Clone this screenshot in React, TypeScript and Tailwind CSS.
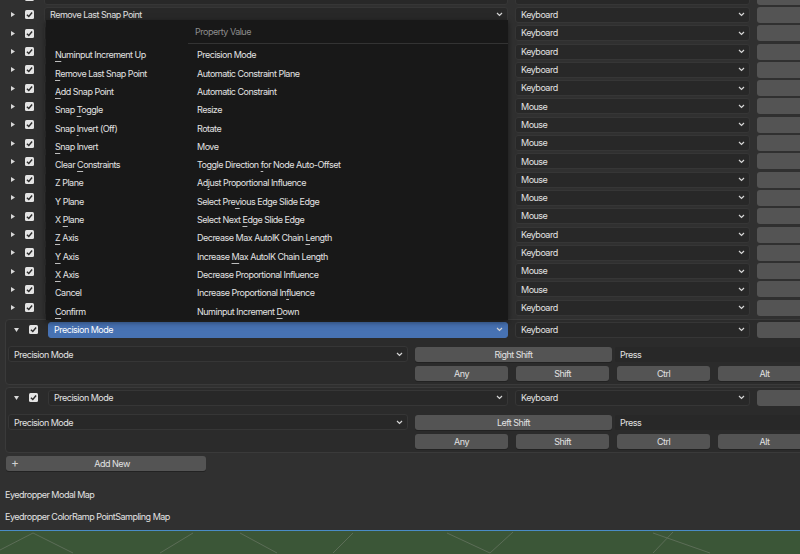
import React from "react";
import clsx from "clsx";

type MenuItem = { label: string; u?: number };

const leftItems: MenuItem[] = [
  { label: "Numinput Increment Up", u: 0 },
  { label: "Remove Last Snap Point", u: 0 },
  { label: "Add Snap Point", u: 0 },
  { label: "Snap Toggle", u: 5 },
  { label: "Snap Invert (Off)", u: 5 },
  { label: "Snap Invert", u: 0 },
  { label: "Clear Constraints", u: 6 },
  { label: "Z Plane" },
  { label: "Y Plane" },
  { label: "X Plane", u: 2 },
  { label: "Z Axis", u: 0 },
  { label: "Y Axis", u: 0 },
  { label: "X Axis", u: 0 },
  { label: "Cancel" },
  { label: "Confirm", u: 0 },
];

const rightItems: MenuItem[] = [
  { label: "Precision Mode" },
  { label: "Automatic Constraint Plane" },
  { label: "Automatic Constraint" },
  { label: "Resize" },
  { label: "Rotate" },
  { label: "Move" },
  { label: "Toggle Direction for Node Auto-Offset", u: 17 },
  { label: "Adjust Proportional Influence", u: 2 },
  { label: "Select Previous Edge Slide Edge", u: 10 },
  { label: "Select Next Edge Slide Edge", u: 12 },
  { label: "Decrease Max AutoIK Chain Length", u: 26 },
  { label: "Increase Max AutoIK Chain Length", u: 9 },
  { label: "Decrease Proportional Influence" },
  { label: "Increase Proportional Influence", u: 24 },
  { label: "Numinput Increment Down", u: 19 },
];

// collapsed keymap rows; the first is cut by the top edge, the rest sit under the open menu
const rowTypes = [
  "Keyboard", "Keyboard", "Keyboard", "Keyboard", "Keyboard", "Keyboard",
  "Mouse", "Mouse", "Mouse", "Mouse", "Mouse", "Mouse", "Mouse",
  "Keyboard", "Keyboard", "Mouse", "Mouse", "Keyboard",
];

const Label: React.FC<{ item: MenuItem }> = ({ item }) => {
  if (item.u === undefined) return <span>{item.label}</span>;
  const i = item.u;
  return (
    <span>
      {item.label.slice(0, i)}
      <span className="underline decoration-[#bdbdbd] underline-offset-[3px]">
        {item.label[i]}
      </span>
      {item.label.slice(i + 1)}
    </span>
  );
};

const Chevron = () => (
  <svg width="7" height="5" viewBox="0 0 7 5" className="shrink-0">
    <path d="M1 1l2.5 2.5L6 1" fill="none" stroke="#d6d6d6" strokeWidth="1.2" />
  </svg>
);

const TriRight = () => (
  <svg width="4" height="5" viewBox="0 0 4 5">
    <path d="M0 0L4 2.5L0 5Z" fill="#d8d8d8" />
  </svg>
);

const TriDown = () => (
  <svg width="5" height="4" viewBox="0 0 5 4">
    <path d="M0 0H5L2.5 4Z" fill="#d8d8d8" />
  </svg>
);

const Checkbox = () => (
  <svg width="9" height="9" viewBox="0 0 9 9" className="shrink-0">
    <rect x="0" y="0" width="9" height="9" rx="1.5" fill="#e4e4e4" />
    <path d="M1.9 4.7L3.8 6.5L7.1 2.5" fill="none" stroke="#2a2a2a" strokeWidth="1.4" />
  </svg>
);

const Dropdown: React.FC<{ label?: string; className?: string; active?: boolean }> = ({
  label,
  className,
  active,
}) => (
  <div
    className={clsx(
      "flex h-[16px] shrink-0 items-center rounded-[3px] border pl-[5px] pr-[4px]",
      active ? "border-[#4772b3] bg-[#4772b3] text-white" : "border-[#363636] bg-[#282828]",
      className
    )}
  >
    <span className="flex-1 truncate">{label}</span>
    <Chevron />
  </div>
);

const Button: React.FC<{ label?: string; className?: string }> = ({ label, className }) => (
  <div
    className={clsx(
      "flex h-[15px] shrink-0 items-center justify-center rounded-[3px] bg-[#545454] shadow-[0_1px_0_#222]",
      className
    )}
  >
    {label}
  </div>
);

const CollapsedRow: React.FC<{ name?: string; type?: string }> = ({ name, type }) => (
  <div className="flex h-[18.3px] shrink-0 items-center">
    <div className="flex w-[25px] shrink-0 pl-[11px]">
      <TriRight />
    </div>
    <Checkbox />
    <div className="w-[10px] shrink-0" />
    <Dropdown label={name} className="w-[464px]" />
    <Dropdown label={type} className="ml-[7px] w-[235px]" />
    <div className="ml-[7px] h-[16px] w-[60px] shrink-0 rounded-[3px] bg-[#545454]" />
  </div>
);

const ExpandedItem: React.FC<{ keyName: string; active?: boolean }> = ({ keyName, active }) => (
  <div className="ml-[5px] flex w-[820px] shrink-0 flex-col rounded-[4px] border border-[#3a3a3a] bg-[#2b2b2b] pt-[2px] pb-[3px]">
    <div className="flex h-[16px] items-center">
      <div className="flex w-[23px] shrink-0 pl-[8px]">
        <TriDown />
      </div>
      <Checkbox />
      <div className="w-[10px] shrink-0" />
      <Dropdown label="Precision Mode" active={active} className="w-[460px]" />
      <Dropdown label="Keyboard" className="ml-[7px] w-[235px]" />
      <div className="ml-[7px] h-[16px] w-[60px] shrink-0 rounded-[3px] bg-[#545454]" />
    </div>
    <div className="mt-[9px] flex h-[15px] items-center">
      <Dropdown label="Precision Mode" className="ml-[2px] h-[15px] w-[400px]" />
      <Button label={keyName} className="ml-[7px] w-[197px]" />
      <div className="ml-[3px] flex h-[15px] w-[200px] shrink-0 items-center rounded-[3px] bg-[#282828] pl-[5px]">
        Press
      </div>
    </div>
    <div className="mt-[4px] flex h-[15px] items-center pl-[409px]">
      <Button label="Any" className="w-[93px]" />
      <Button label="Shift" className="ml-[8px] w-[93px]" />
      <Button label="Ctrl" className="ml-[8px] w-[93px]" />
      <Button label="Alt" className="ml-[8px] w-[93px]" />
    </div>
  </div>
);

const OperatorMenu = () => (
  <div className="absolute left-[46px] top-[20px] z-10 h-[300px] w-[462px] bg-[#181818] shadow-[0_2px_6px_rgba(0,0,0,0.5)]">
    <div className="flex h-[23px]">
      <div className="w-[142px]" />
      <div className="flex flex-1 items-center pl-[7px] text-[#8d8d8d]">Property Value</div>
    </div>
    <div className="ml-[142px] h-px bg-[#333]" />
    <div className="flex pt-[2px]">
      <div className="flex w-[142px] flex-col pl-[9px]">
        {leftItems.map((it) => (
          <div key={it.label} className="flex h-[18.3px] items-center">
            <Label item={it} />
          </div>
        ))}
      </div>
      <div className="flex flex-1 flex-col pl-[9px]">
        {rightItems.map((it) => (
          <div key={it.label} className="flex h-[18.3px] items-center">
            <Label item={it} />
          </div>
        ))}
      </div>
    </div>
  </div>
);

const Viewport = () => (
  <div className="h-[23px] shrink-0 bg-[#3b5637]">
    <svg width="800" height="23" viewBox="0 0 800 23">
      <g stroke="#5c6d57" strokeWidth="1" fill="none">
        <path d="M0 19L33 2L73 22" />
        <path d="M160 22L193 2" />
        <path d="M240 2L277 22" />
        <path d="M333 22L353 2" />
        <path d="M447 2L490 22L513 1" />
        <path d="M653 2L710 22" />
        <path d="M653 22L673 1" />
      </g>
    </svg>
  </div>
);

export default function App() {
  return (
    <div className="flex h-[554px] w-[800px] flex-col overflow-hidden bg-[#303030] font-['Inter',sans-serif] text-[9px] tracking-[-0.5px] text-[#e2e2e2]">
      <div className="relative flex h-[530px] shrink-0 flex-col overflow-hidden">
        <div className="-mt-[12.5px] flex flex-col">
          {rowTypes.map((t, i) => (
            <CollapsedRow
              key={i}
              name={i === 1 ? "Remove Last Snap Point" : undefined}
              type={i === 0 ? undefined : t}
            />
          ))}
        </div>
        <div className="mt-[2px] flex flex-col gap-[2px]">
          <ExpandedItem keyName="Right Shift" active />
          <ExpandedItem keyName="Left Shift" />
        </div>
        <div className="ml-[6px] mt-[3px] flex h-[15px] w-[200px] shrink-0 items-center rounded-[3px] bg-[#545454] shadow-[0_1px_0_#222]">
          <span className="w-[16px] pl-[5px] text-[12px] leading-none text-[#d0d0d0]">+</span>
          <span className="flex-1 pr-[4px] text-center">Add New</span>
        </div>
        <div className="ml-[5px] mt-[15px] flex h-[18px] items-center">Eyedropper Modal Map</div>
        <div className="ml-[5px] mt-[4px] flex h-[18px] items-center">
          Eyedropper ColorRamp PointSampling Map
        </div>
        <OperatorMenu />
      </div>
      <div className="h-px shrink-0 bg-[#4a8cc6]" />
      <Viewport />
    </div>
  );
}
